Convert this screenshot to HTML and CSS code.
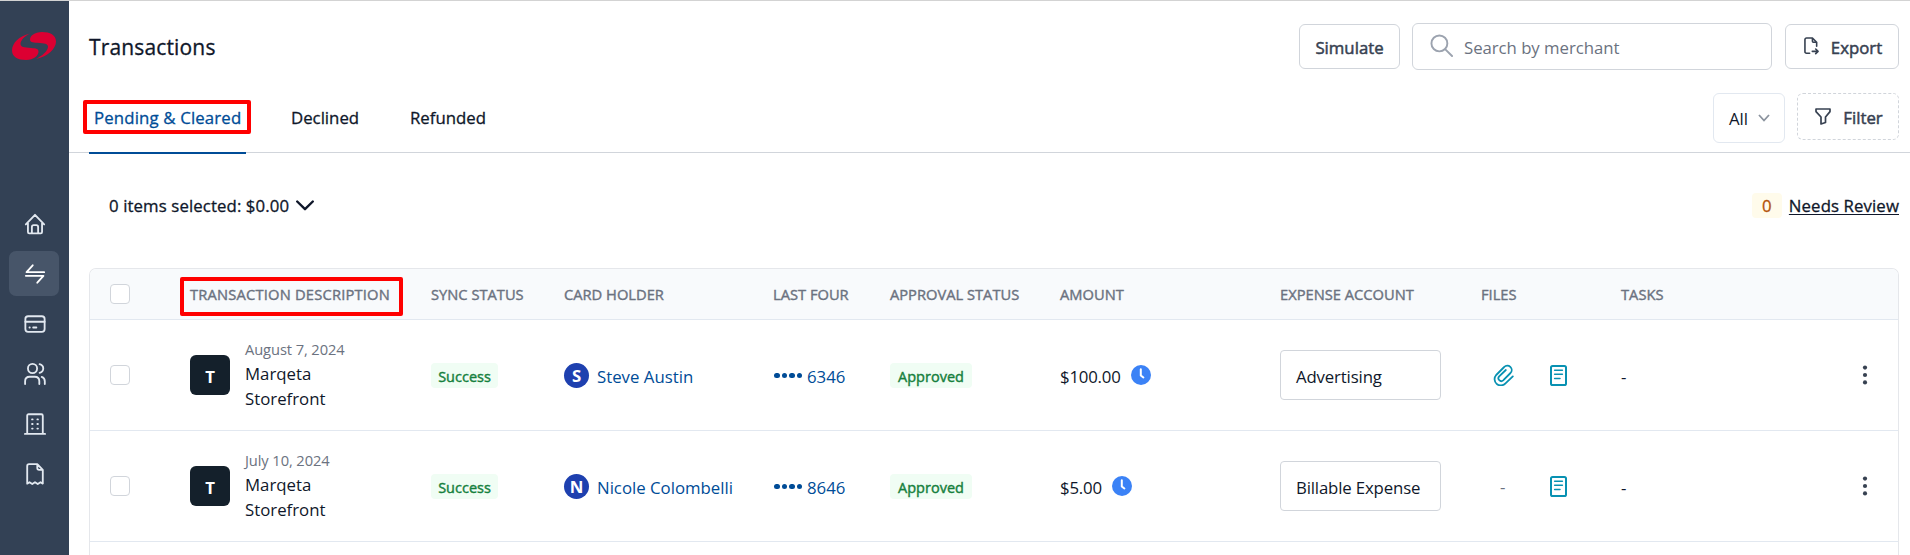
FILE: index.html
```
<!DOCTYPE html>
<html lang="en">

<head>
    <meta charset="UTF-8">
    <meta name="viewport" content="width=device-width, initial-scale=1.0">
    <title>Transactions</title>
    <link rel="stylesheet" href="styles.css">
</head>

<body>

    <!-- shared icons -->
    <svg class="sprite" aria-hidden="true">
        <symbol id="clock" viewBox="0 0 20 20">
            <circle cx="10" cy="10" r="10" fill="#3b82f6" />
            <path d="M9.8 4.2v6.3l2.6 2" fill="none" stroke="#fff" stroke-width="2" stroke-linecap="round" stroke-linejoin="round" />
        </symbol>
        <symbol id="receipt" viewBox="0 0 17 21">
            <rect x="1" y="1" width="15" height="19" rx="1.6" fill="none" stroke="#0891b2" stroke-width="2" />
            <path d="M4.6 5.3h7.8M4.6 9.3h7.8M4.6 13.4h5.4" stroke="#0891b2" stroke-width="1.5" stroke-linecap="round" />
        </symbol>
        <symbol id="clip" viewBox="0 0 62 66">
            <path d="M59 37 37 58A18.500 18.500 0 0 1 9 33L33 9A13 13 0 0 1 52 27L30 49A8.500 8.500 0 0 1 18 37L38 18" fill="none" />
        </symbol>
        <symbol id="dots" viewBox="0 0 6 20">
            <circle cx="3" cy="2.6" r="2.1" />
            <circle cx="3" cy="10" r="2.1" />
            <circle cx="3" cy="17.4" r="2.1" />
        </symbol>
    </svg>

    <aside class="sidebar">
        <svg class="logo" viewBox="0 0 44 28">
            <path d="M18 1.600C7 4 0 11.500 0 18.500 0 25 6 28 14 28c8 0 12.500-4.500 12.500-8.500 0-2.500-2-3.200-7.500-3.500-7-.4-10.500-1.200-10.500-4C8.500 8.500 12.500 4 18 1.600z" />
            <path d="M24 27C36 24.500 44 16.500 44 9.500 44 3 38 0 30 0c-7.500 0-12 4-12 7.500 0 2.500 2 3 7.500 3.300 7 .4 10.500 1.200 10.500 4C36 19 30 24 24 27z" />
        </svg>
        <nav class="nav">
            <a class="nav__item" href="#">
                <svg viewBox="0 0 24 24">
                    <path d="M2 12.500 12 2l10 10.500M4.300 11v9.800c0 .9.500 1.400 1.400 1.400h12.600c.9 0 1.400-.5 1.400-1.400V11M8.600 22v-6.800c0-1.300.7-2 2-2h2.800c1.300 0 2 .7 2 2V22" />
                </svg>
            </a>
            <a class="nav__item nav__item--active" href="#">
                <svg viewBox="0 0 24 24">
                    <path d="M22 10H2.800l6.700-7.500M2 14h19.200l-6.700 7.500" />
                </svg>
            </a>
            <a class="nav__item" href="#">
                <svg viewBox="0 0 24 24">
                    <rect x="1.500" y="3.500" width="21" height="17" rx="3" />
                    <path d="M1.500 9.500h21M6 15.800h.3M10 15.800h3.500" />
                </svg>
            </a>
            <a class="nav__item" href="#">
                <svg viewBox="0 0 24 24">
                    <circle cx="9.300" cy="6" r="5" />
                    <path d="M1.200 23v-3c0-3.500 2-5 5-5h5.500c3 0 5 1.500 5 5v3M17 1.300c2.500.7 4 2.500 4 4.700s-1.500 4-4 4.700M19.300 15.200c2.200.7 3.400 2.300 3.400 4.800v3" />
                </svg>
            </a>
            <a class="nav__item" href="#">
                <svg viewBox="0 0 24 24">
                    <path d="M1 22.800h22M3.500 22V3c0-1 .6-1.600 1.600-1.600h13.800c1 0 1.600.6 1.600 1.600v19" />
                    <path d="M8.800 7h.6M14.600 7h.6M8.800 12h.6M14.600 12h.6M8.800 17h.6M14.600 17h.6" />
                </svg>
            </a>
            <a class="nav__item" href="#">
                <svg viewBox="0 0 24 24">
                    <path d="M14.500 1.200H5.500c-1.300 0-2 .7-2 2v19.300l2.500-1.500 3 2 3-2 3 2 3-2 2.500 1.500V7.500zM14.500 1.200v4.300c0 1.300.7 2 2 2h4" />
                </svg>
            </a>
        </nav>
    </aside>

    <main class="main">
        <header class="header">
            <h1 class="title">Transactions</h1>
            <button class="btn btn--simulate">Simulate</button>
            <div class="search">
                <svg viewBox="0 0 24 24">
                    <circle cx="9.800" cy="9.800" r="8.300" />
                    <path d="m16 16 7 7" />
                </svg>
                <span>Search by merchant</span>
            </div>
            <button class="btn btn--export">
                <svg viewBox="0 0 16 19">
                    <path d="M6 17.200H2.700c-1 0-1.700-.7-1.700-1.700V2.700C1 1.700 1.700 1 2.700 1H9l4.500 4.500v4.200M9 1v3.500c0 .7.400 1 1 1h3.500M8.800 15.200h6M12.500 12.700l2.500 2.500-2.500 2.500" />
                </svg>
                <span>Export</span>
            </button>
        </header>

        <div class="tabs">
            <a class="tab tab--active" href="#">Pending &amp; Cleared
                <i class="mark mark--tab"></i>
            </a>
            <a class="tab tab--declined" href="#">Declined</a>
            <a class="tab tab--refunded" href="#">Refunded</a>
            <div class="tabs__right">
                <div class="select">
                    <span>All</span>
                    <svg viewBox="0 0 12 8"><path d="m1 1 5 5.500L11 1" /></svg>
                </div>
                <button class="btn btn--filter">
                    <svg viewBox="0 0 16 17">
                        <path d="M1 1h14v2.600L10.500 9v5.500L6 16V9L1 3.600z" />
                    </svg>
                    <span>Filter</span>
                </button>
            </div>
        </div>

        <div class="summary">
            <div class="summary__selected">
                <span>0 items selected: $0.00</span>
                <svg viewBox="0 0 18 11"><path d="m1.200 1.500 7.800 7.700 7.800-7.700" /></svg>
            </div>
            <div class="summary__review">
                <span class="count">0</span>
                <a class="review" href="#">Needs Review</a>
            </div>
        </div>

        <section class="table">
            <div class="row row--head">
                <div><span class="checkbox"></span></div>
                <div class="th th--desc">Transaction Description<i class="mark mark--head"></i></div>
                <div class="th">Sync Status</div>
                <div class="th">Card Holder</div>
                <div class="th">Last Four</div>
                <div class="th">Approval Status</div>
                <div class="th">Amount</div>
                <div class="th">Expense Account</div>
                <div class="th">Files</div>
                <div class="th">Tasks</div>
                <div></div>
            </div>

            <div class="row">
                <div><span class="checkbox"></span></div>
                <div class="merchant">
                    <span class="tile">T</span>
                    <div class="merchant__text">
                        <div class="date">August 7, 2024</div>
                        <div>Marqeta</div>
                        <div>Storefront</div>
                    </div>
                </div>
                <div><span class="badge">Success</span></div>
                <div class="holder"><span class="avatar">S</span><a href="#">Steve Austin</a></div>
                <div class="four"><span class="four__dots"><i></i><i></i><i></i><i></i></span><a href="#">6346</a></div>
                <div><span class="badge badge--approved">Approved</span></div>
                <div class="amount"><span>$100.00</span><svg><use href="#clock" /></svg></div>
                <div><div class="account"><span>Advertising</span></div></div>
                <div class="files">
                    <span class="files__clip"><svg class="icon-clip"><use href="#clip" /></svg></span>
                    <svg class="icon-receipt"><use href="#receipt" /></svg>
                </div>
                <div class="tasks">-</div>
                <div class="more"><svg><use href="#dots" /></svg></div>
            </div>

            <div class="row">
                <div><span class="checkbox"></span></div>
                <div class="merchant">
                    <span class="tile">T</span>
                    <div class="merchant__text">
                        <div class="date">July 10, 2024</div>
                        <div>Marqeta</div>
                        <div>Storefront</div>
                    </div>
                </div>
                <div><span class="badge">Success</span></div>
                <div class="holder"><span class="avatar">N</span><a href="#">Nicole Colombelli</a></div>
                <div class="four"><span class="four__dots"><i></i><i></i><i></i><i></i></span><a href="#">8646</a></div>
                <div><span class="badge badge--approved">Approved</span></div>
                <div class="amount"><span>$5.00</span><svg><use href="#clock" /></svg></div>
                <div><div class="account"><span>Billable Expense</span></div></div>
                <div class="files">
                    <span class="files__clip">-</span>
                    <svg class="icon-receipt"><use href="#receipt" /></svg>
                </div>
                <div class="tasks">-</div>
                <div class="more"><svg><use href="#dots" /></svg></div>
            </div>
        </section>
    </main>

</body>

</html>
```
FILE: styles.css
```
*,
*:before,
*:after {
    box-sizing: border-box;
}

body {
    margin: 0;
    height: 100vh;
    display: flex;
    overflow: hidden;
    border-top: 1px solid #d3d3d3;
    background: #fff;
    color: #0f172a;
    font-family: "Open Sans", "Noto Sans", sans-serif;
    font-size: 16.8px;
    line-height: 25px;
}

a {
    color: inherit;
    text-decoration: none;
}

svg {
    display: block;
    flex: none;
}

.sprite {
    width: 0;
    height: 0;
    position: absolute;
}

/* Sidebar */
.sidebar {
    flex: none;
    width: 69px;
    background: #334155;
}

.logo {
    width: 44px;
    height: 28px;
    margin: 31px 0 0 12px;
    fill: #dc0032;
}

.nav {
    margin: 141px 0 0 9px;
    display: flex;
    flex-direction: column;
    gap: 5px;
}

.nav__item {
    width: 50px;
    height: 45px;
    padding-left: 1px;
    display: flex;
    align-items: center;
    justify-content: center;
    border-radius: 7px;
}

.nav__item--active {
    background: #475569;
}

.nav__item svg {
    width: 22px;
    height: 22px;
    fill: none;
    stroke: #e2e8f0;
    stroke-width: 2;
    stroke-linecap: round;
    stroke-linejoin: round;
}

.nav__item--active svg {
    stroke: #fff;
}

/* Header */
.main {
    flex: 1;
    min-width: 0;
    display: flex;
    flex-direction: column;
}

.header {
    flex: none;
    height: 91px;
    padding: 0 11px 0 20px;
    display: flex;
    align-items: center;
}

.title {
    margin: 0 auto 0 0;
    font-size: 21px;
    font-weight: 500;
    letter-spacing: .15px;
    line-height: 28px;
    -webkit-text-stroke: .3px;
}

.btn {
    height: 45px;
    padding: 1px 0 0;
    display: flex;
    align-items: center;
    justify-content: center;
    border: 1px solid #d1d5db;
    border-radius: 6px;
    background: #fff;
    color: #374151;
    font: 500 16.8px "Open Sans", "Noto Sans", sans-serif;
    -webkit-text-stroke: .5px;
}

.btn svg {
    fill: none;
    stroke: #374151;
    stroke-width: 1.7;
    stroke-linecap: round;
    stroke-linejoin: round;
}

.btn--simulate {
    width: 101px;
}

.search {
    width: 360px;
    height: 47px;
    margin: 0 13px 0 12px;
    padding-left: 17px;
    display: flex;
    align-items: center;
    gap: 11px;
    border: 1px solid #d1d5db;
    border-radius: 6px;
    color: #6b7280;
}

.search svg {
    width: 23px;
    height: 23px;
    margin-bottom: 2px;
    fill: none;
    stroke: #9ca3af;
    stroke-width: 2;
    stroke-linecap: round;
}

.search span {
    padding-top: 2px;
    letter-spacing: -.05px;
}

.btn--export {
    width: 114px;
    gap: 12px;
    padding-left: 2px;
}

.btn--export svg {
    width: 15px;
    height: 18px;
    margin-bottom: 2px;
}

/* Tabs */
.tabs {
    flex: none;
    height: 61px;
    padding: 0 11px 0 20px;
    display: flex;
    border-bottom: 1px solid #d1d5db;
}

.tab {
    height: 62px;
    padding-top: 13px;
    font-weight: 500;
    -webkit-text-stroke: .3px;
}

.tab--active {
    position: relative;
    width: 157px;
    padding-left: 5px;
    border-bottom: 2px solid #004c97;
    color: #004c97;
    letter-spacing: .15px;
}

.tab--declined {
    width: 119px;
    margin-left: 45px;
}

.tabs__right {
    margin: 1px 0 0 auto;
    display: flex;
    gap: 12px;
}

.select {
    width: 72px;
    height: 50px;
    padding: 0 0 0 15px;
    display: flex;
    align-items: center;
    gap: 10px;
    border: 1px solid #e2e8f0;
    border-radius: 6px;
}

.select svg {
    width: 12px;
    height: 8px;
    fill: none;
    stroke: #8b939e;
    stroke-width: 1.8;
}

.btn--filter {
    width: 102px;
    height: 47px;
    padding-left: 2px;
    gap: 12px;
    border-style: dashed;
}

.btn--filter svg {
    width: 16px;
    height: 17px;
    margin-bottom: 2px;
}

/* red outlines around the tab and the column title */
.mark {
    position: absolute;
    border: 4px solid #f00;
    border-radius: 2px;
}

.mark--tab {
    left: -6px;
    top: 8px;
    width: 168px;
    height: 34px;
}

.mark--head {
    left: -10px;
    width: 223px;
    height: 39px;
}

/* Summary line */
.summary {
    flex: none;
    height: 115px;
    padding: 0 11px 4px 40px;
    display: flex;
    align-items: center;
    justify-content: space-between;
    font-weight: 500;
}

.summary__selected,
.summary__review {
    padding-bottom: 6px;
    display: flex;
    align-items: center;
    gap: 7px;
    letter-spacing: .1px;
    -webkit-text-stroke: .3px;
}

.summary__selected svg {
    width: 18px;
    height: 11px;
    fill: none;
    stroke: #0f172a;
    stroke-width: 2.4;
    stroke-linecap: round;
    stroke-linejoin: round;
}

.count {
    width: 30px;
    height: 25px;
    border-radius: 4px;
    background: #fffbeb;
    color: #b45309;
    text-align: center;
}

.review {
    text-decoration: underline;
    text-underline-offset: 2px;
}

/* Table */
.table {
    flex: 1;
    min-height: 0;
    margin: 0 11px 0 20px;
    border: 1px solid #e5e7eb;
    border-bottom: 0;
    border-radius: 7px 7px 0 0;
    overflow: hidden;
}

.row {
    height: 111px;
    padding-left: 20px;
    display: grid;
    grid-template-columns: 80px 241px 133px 209px 117px 170px 220px 201px 140px 234px 1fr;
    align-items: center;
    border-bottom: 1px solid #e2e8f0;
}

.row--head {
    height: 51px;
    background: #f8fafc;
}

.th {
    color: #6b7280;
    font-size: 14.7px;
    font-weight: 500;
    text-transform: uppercase;
    white-space: nowrap;
    -webkit-text-stroke: .4px;
}

.th--desc {
    position: relative;
    letter-spacing: .2px;
}

.th--desc .mark {
    top: -5px;
}

.checkbox {
    width: 20px;
    height: 20px;
    display: block;
    border: 1px solid #d1d5db;
    border-radius: 4px;
    background: #fff;
}

.merchant {
    display: flex;
    align-items: center;
    gap: 15px;
}

.merchant__text {
    padding-bottom: 1px;
}

.tile {
    width: 40px;
    height: 40px;
    border-radius: 6px;
    background: #14202b;
    color: #fff;
    font-weight: 700;
    line-height: 43px;
    text-align: center;
}

.date {
    color: #6b7280;
    font-size: 14.7px;
    letter-spacing: -.1px;
    line-height: 23px;
}

.badge {
    width: 67px;
    height: 25px;
    padding-top: 1px;
    display: block;
    border-radius: 4px;
    background: #f0fdf4;
    color: #15803d;
    font-size: 14.5px;
    font-weight: 500;
    text-align: center;
    -webkit-text-stroke: .4px;
}

.badge--approved {
    width: 82px;
}

.holder,
.four,
.amount,
.files {
    display: flex;
    align-items: center;
}

.holder,
.four {
    color: #004c97;
}

.holder {
    gap: 8px;
}

.holder a,
.four a,
.amount span,
.tasks {
    padding-top: 2px;
}

.avatar {
    width: 25px;
    height: 25px;
    border-radius: 50%;
    background: #1e40af;
    color: #fff;
    font-weight: 700;
    line-height: 26px;
    text-align: center;
}

.four {
    padding-left: 1px;
    gap: 5px;
}

.four__dots {
    padding-top: 1px;
    display: flex;
    gap: 2px;
}

.four__dots i {
    width: 5.5px;
    height: 5.5px;
    border-radius: 50%;
    background: #004c97;
}

.amount {
    gap: 10px;
    letter-spacing: -.2px;
}

.amount svg {
    width: 20px;
    height: 20px;
}

.account {
    width: 161px;
    height: 50px;
    padding: 13px 15px 0;
    border: 1px solid #d1d5db;
    border-radius: 4px;
    letter-spacing: -.15px;
    white-space: nowrap;
}

.files__clip {
    width: 46px;
    margin: 0 11px 0 12px;
    padding-left: 7px;
    color: #6b7280;
}

.icon-clip {
    width: 21px;
    height: 22px;
    margin-left: -7px;
    stroke: #0891b2;
    stroke-width: 5.4;
    stroke-linecap: round;
    stroke-linejoin: round;
}

.icon-receipt {
    width: 17px;
    height: 21px;
}

.more svg {
    width: 6px;
    height: 20px;
    margin-left: 7px;
    fill: #374151;
}
```
